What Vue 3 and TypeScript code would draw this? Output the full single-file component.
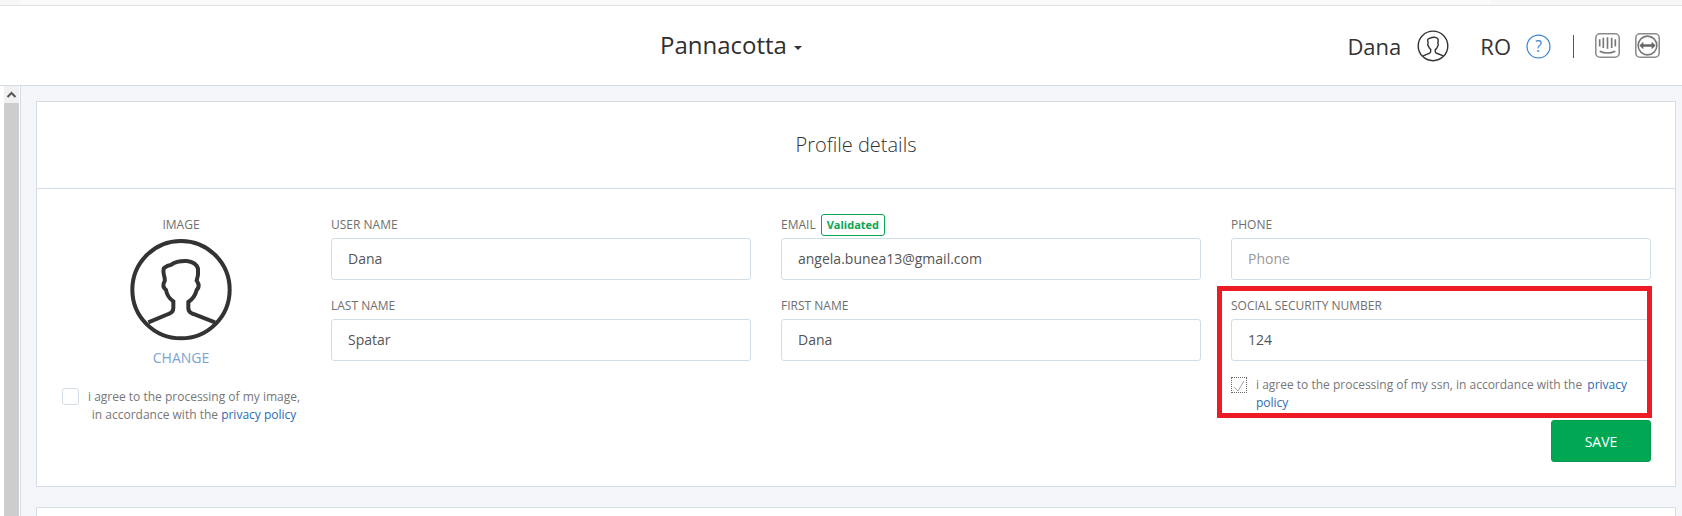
<script setup lang="ts">
const avatarPath = 'M355 365 L415 340 Q430 335 430 322 L430 302 Q412 290 408 268 Q396 258 402 246 Q406 240 404 232 Q398 210 402 202 Q412 194 424 192 Q440 180 470 181 Q498 184 504 204 Q506 222 500 240 Q512 256 500 268 Q494 292 475 304 L475 322 Q475 335 490 340 L555 365'
</script>

<template>
  <div class="page">
    <div class="strip"><div class="strip-inner"></div></div>
    <header class="header">
      <div class="brand">Pannacotta <span class="caret"></span></div>
      <div class="tools">
        <span class="user">Dana</span>
        <svg class="user-icon" viewBox="295 110 316 316"><circle cx="453" cy="267" r="146" fill="none" stroke="#333" stroke-width="14"/><path :d="avatarPath" fill="none" stroke="#333" stroke-width="14"/></svg>
        <span class="lang">RO</span>
        <svg class="help" viewBox="0 0 24 24"><circle cx="12" cy="12" r="11" fill="none" stroke="#3d85d1" stroke-width="1.2"/><text x="12" y="17" text-anchor="middle" class="help-text">?</text></svg>
        <span class="sep"></span>
        <svg class="app-icon" viewBox="0 0 24 24"><rect x="0.75" y="0.75" width="22.5" height="22.5" rx="4" fill="#fff" stroke="#8c8c8c" stroke-width="1.5"/><path d="M4.500 6v7M8 4.500v10M12 4v11M16 4.500v10M19.500 6v7" stroke="#777" stroke-width="1.6" fill="none"/><path d="M4.500 17.500Q12 21 19.500 17.500" stroke="#777" stroke-width="1.4" fill="none"/></svg>
        <svg class="app-icon teamviewer" viewBox="0 0 24 24"><rect x="0.75" y="0.75" width="22.5" height="22.5" rx="4" fill="#fff" stroke="#8c8c8c" stroke-width="1.5"/><circle cx="12" cy="12" r="9" fill="none" stroke="#777" stroke-width="1.5"/><path d="M8 10.800h8v-2.300l3.800 3.500-3.800 3.500v-2.300H8v2.300L4.200 12 8 8.500z" fill="#666"/></svg>
      </div>
    </header>
    <div class="body">
      <div class="scrollbar">
        <div class="scroll-btn"><svg viewBox="0 0 15 10" class="scroll-arrow"><path d="M3.500 7 L7.500 3 L11.500 7" fill="none" stroke="#555" stroke-width="2"/></svg></div>
      </div>
      <main class="main">
        <section class="card">
          <h2 class="card-title">Profile details</h2>
          <div class="card-body">
            <div class="image-col">
              <div class="label">IMAGE</div>
              <svg class="avatar" viewBox="300 115 306 306"><circle cx="453" cy="267" r="146" fill="none" stroke="#333" stroke-width="12"/><path :d="avatarPath" fill="none" stroke="#333" stroke-width="12"/></svg>
              <a class="change">CHANGE</a>
              <div class="image-consent">
                <span class="check"></span>
                <p class="consent-center">i agree to the processing of my image,<br>in accordance with the <a class="link">privacy policy</a></p>
              </div>
            </div>
            <div class="fields">
              <div class="field">
                <div class="label">USER NAME</div>
                <div class="input">Dana</div>
              </div>
              <div class="field">
                <div class="label">EMAIL <span class="badge">Validated</span></div>
                <div class="input">angela.bunea13@gmail.com</div>
              </div>
              <div class="field">
                <div class="label">PHONE</div>
                <div class="input placeholder">Phone</div>
              </div>
              <div class="field">
                <div class="label">LAST NAME</div>
                <div class="input">Spatar</div>
              </div>
              <div class="field">
                <div class="label">FIRST NAME</div>
                <div class="input">Dana</div>
              </div>
              <div class="field ssn">
                <div class="label">SOCIAL SECURITY NUMBER</div>
                <div class="input">124</div>
                <div class="ssn-consent">
                  <span class="check focus"><svg viewBox="0 0 14 14" class="tick"><path d="M2 9 L6 13 L12 3" fill="none" stroke="#9a9a9a" stroke-width="0.9"/></svg></span>
                  <p>i agree to the processing of my ssn, in accordance with the <a class="link gap">privacy policy</a></p>
                </div>
                <div class="red-box"></div>
                <div class="actions"><button class="save">SAVE</button></div>
              </div>
            </div>
          </div>
        </section>
        <section class="card next"></section>
      </main>
    </div>
  </div>
</template>

<style>
html, body { margin: 0; overflow: hidden; background: #fff; }
</style>

<style scoped>
.page {
  width: 1682px;
  height: 516px;
  overflow: hidden;
  font-family: "Open Sans", "Liberation Sans", sans-serif;
  color: #333;
  display: flex;
  flex-direction: column;
}
.strip {
  height: 5px;
  background: #f7f7f7;
  border-bottom: 1px solid #e2e2e2;
  flex: none;
}
.strip-inner {
  height: 5px;
  width: 1470px;
  margin-left: 20px;
  background: #fafafa;
}
.header {
  height: 79px;
  flex: none;
  position: relative;
  display: flex;
  align-items: center;
  justify-content: flex-end;
  background: #fff;
  border-bottom: 1px solid #d3dde5;
}
.brand {
  position: absolute;
  left: 660px;
  top: 22px;
  font-size: 24px;
  line-height: 33px;
  color: #2f2f2f;
}
.caret {
  display: inline-block;
  vertical-align: middle;
  border-top: 4px solid #333;
  border-left: 4px solid transparent;
  border-right: 4px solid transparent;
  margin-left: 1px;
}
.tools {
  display: flex;
  align-items: center;
  padding-right: 22px;
}
.user, .lang { font-size: 22px; line-height: 30px; color: #333; }
.user-icon { width: 32px; height: 32px; margin-left: 16px; }
.lang { margin-left: 31px; }
.help { width: 25px; height: 25px; margin-left: 15px; margin-top: 1px; }
.help-text { font-size: 15px; fill: #3d85d1; font-family: "Open Sans", sans-serif; }
.sep { width: 1.500px; height: 23px; background: #555; margin: 2px 0 0 21.500px; }
.app-icon { width: 25px; height: 25px; margin-left: 21px; }
.teamviewer { margin-left: 15px; }
.body { flex: 1; display: flex; min-height: 0; }
.scrollbar {
  width: 15px;
  margin-left: 4px;
  margin-right: 1px;
  background: #cdcdcd;
  flex: none;
}
.scroll-btn { height: 17px; background: #f1f1f1; display: flex; align-items: center; }
.scroll-arrow { width: 15px; height: 10px; }
.main {
  flex: 1;
  background: #f5f6fa;
  border-left: 1px solid #d3dde5;
  padding: 15px 6px 0 15px;
  min-width: 0;
}
.card {
  background: #fff;
  border: 1px solid #d3dde5;
  height: 386px;
  box-sizing: border-box;
  display: flex;
  flex-direction: column;
}
.card.next { height: 60px; margin-top: 20px; }
.card-title {
  margin: 0;
  height: 86px;
  flex: none;
  border-bottom: 1px solid #d3dde5;
  font-weight: 300;
  font-size: 20px;
  line-height: 86px;
  text-align: center;
  color: #333;
}
.card-body { display: flex; padding: 27px 0 0 0; }
.image-col {
  width: 288px;
  margin-right: 6px;
  flex: none;
  display: flex;
  flex-direction: column;
  align-items: center;
}
.label {
  font-size: 12px;
  line-height: 17px;
  height: 22px;
  color: #6f6f6f;
  display: flex;
  align-items: flex-start;
  gap: 5px;
}
.image-col .label { height: 18px; }
.avatar { width: 102px; height: 102px; margin-top: 5px; }
.change {
  margin-top: 7px;
  font-size: 14px;
  line-height: 20px;
  color: #7aa3d2;
}
.image-consent {
  width: 238px;
  margin-top: 20px;
  display: flex;
  gap: 9px;
}
.check {
  width: 17px;
  height: 17px;
  flex: none;
  box-sizing: border-box;
  border: 1px solid #d3dde5;
  border-radius: 3px;
  display: block;
}
.consent-center { margin: 0; text-align: center; font-size: 12px; line-height: 18px; color: #777; white-space: nowrap; }
.link { color: #2a6db5; }
.link.gap { margin-left: 2px; }
.fields {
  flex: 1;
  display: grid;
  grid-template-columns: 420px 420px 420px;
  column-gap: 30px;
  row-gap: 17px;
  align-content: start;
}
.field { position: relative; min-width: 0; }
.badge {
  display: block;
  box-sizing: border-box;
  height: 22px;
  margin-top: -2px;
  font-size: 11px;
  line-height: 20px;
  padding: 0 5px;
  font-weight: 700;
  color: #08a654;
  border: 1px solid #08a654;
  border-radius: 3px;
}
.input {
  height: 42px;
  box-sizing: border-box;
  border: 1px solid #d3dde5;
  border-radius: 3px;
  padding: 0 16px;
  font-size: 14px;
  line-height: 40px;
  color: #555;
  background: #fff;
}
.placeholder { color: #999; }
.ssn-consent {
  display: flex;
  gap: 9px;
  margin-top: 15px;
}
.ssn-consent p {
  margin: 0;
  font-size: 12px;
  line-height: 18px;
  color: #777;
}
.check.focus { width: 16px; height: 16px; margin-top: 1px; border: 1px dotted #666; border-radius: 1px; }
.tick { display: block; width: 14px; height: 14px; }
.red-box {
  position: absolute;
  left: -14px;
  top: -11px;
  width: 435px;
  height: 132px;
  box-sizing: border-box;
  border: 5px solid #ed1c24;
  pointer-events: none;
}
.actions { display: flex; justify-content: flex-end; margin-top: 8px; }
.save {
  width: 100px;
  height: 42px;
  padding: 0;
  background: #00a854;
  border: 1px solid #0a9a50;
  border-radius: 3px;
  color: #fff;
  font-family: inherit;
  font-size: 14px;
}
</style>
